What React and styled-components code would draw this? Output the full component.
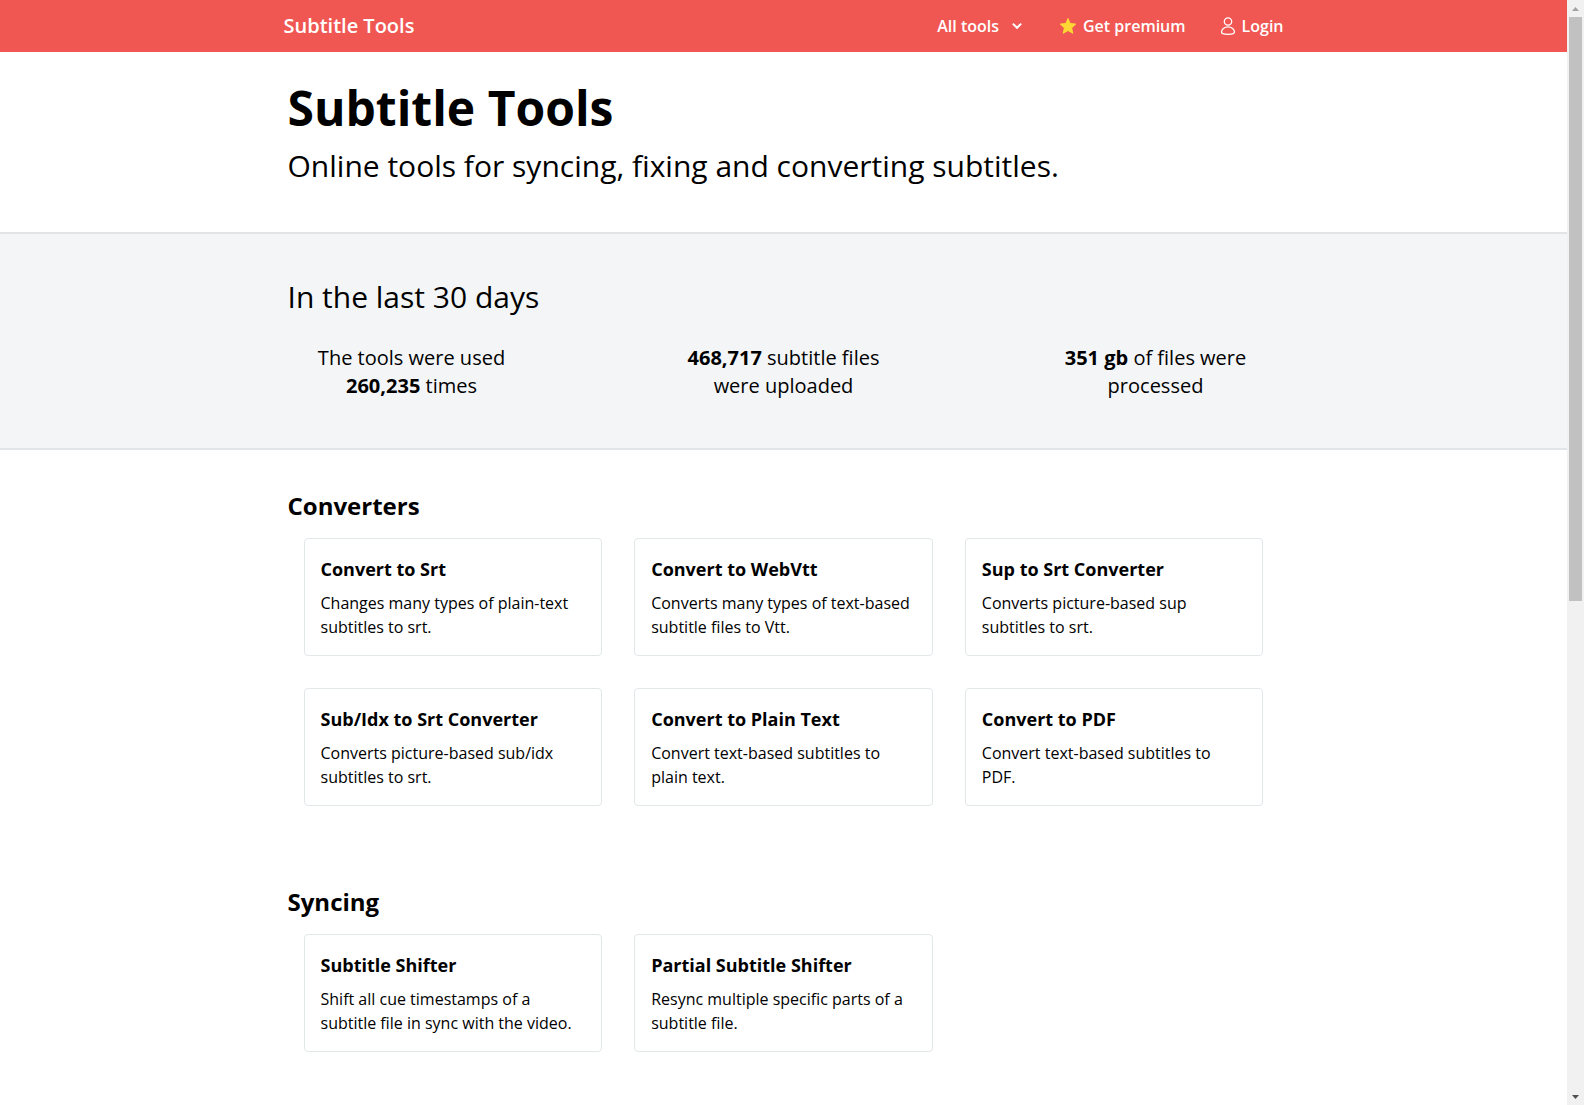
import React from "react";
import styled, { createGlobalStyle } from "styled-components";

const GlobalStyle = createGlobalStyle`
  * {
    box-sizing: border-box;
    margin: 0;
    padding: 0;
  }

  body {
    font-family: "Open Sans", sans-serif;
    font-size: 16px;
    font-weight: 400;
    line-height: 24px;
    color: #000000;
    background: #ffffff;
  }
`;

const Window = styled.div`
  display: grid;
  grid-template-columns: minmax(0, 1fr) 17px;
  height: 100vh;
`;

const Page = styled.div`
  overflow: hidden;
`;

const Header = styled.header`
  background: #f05752;
  color: #ffffff;
`;

const HeaderInner = styled.div`
  display: flex;
  align-items: center;
  justify-content: space-between;
  max-width: 1000px;
  height: 52px;
  margin: 0 auto;
`;

const Logo = styled.a`
  color: inherit;
  font-size: 20px;
  font-weight: 600;
  text-decoration: none;
`;

const Nav = styled.nav`
  display: flex;
  align-items: center;
  gap: 34px;
`;

const NavLink = styled.a`
  display: flex;
  align-items: center;
  gap: 6px;
  color: inherit;
  font-weight: 600;
  text-decoration: none;
`;

const NavButton = styled.button`
  display: flex;
  align-items: center;
  gap: 12px;
  border: none;
  background: none;
  color: inherit;
  font: inherit;
  font-weight: 600;
  cursor: pointer;
`;

const Container = styled.div`
  max-width: 1024px;
  margin: 0 auto;
  padding: ${(props) => props.$padding};
`;

const Title = styled.h1`
  font-size: 48px;
  font-weight: 700;
  line-height: 48px;
`;

const Lead = styled.p`
  margin-top: 16px;
  font-size: 30px;
  line-height: 36px;
`;

const Stats = styled.section`
  border-top: 2px solid #e2e5e7;
  border-bottom: 2px solid #e2e5e7;
  background: #f3f5f7;
`;

const StatsTitle = styled.h2`
  font-size: 30px;
  font-weight: 400;
  line-height: 30px;
`;

const StatsRow = styled.div`
  display: flex;
  justify-content: space-between;
  margin-top: 32px;
`;

const Stat = styled.p`
  width: 25%;
  padding: 0 24px;
  font-size: 20px;
  line-height: 28px;
  text-align: center;

  & b {
    font-weight: 700;
  }
`;

const Sections = styled.main`
  display: flex;
  flex-direction: column;
  gap: 80px;
`;

const SectionTitle = styled.h2`
  font-size: 24px;
  font-weight: 700;
  line-height: 32px;
`;

const CardGrid = styled.div`
  display: grid;
  grid-template-columns: repeat(3, minmax(0, 1fr));
  gap: 32px;
  margin-top: 16px;
  padding: 0 16px;
`;

const Card = styled.a`
  padding: 16px;
  border: 1px solid #e2e7ea;
  border-radius: 4px;
  color: inherit;
  text-decoration: none;
`;

const CardTitle = styled.h3`
  margin-bottom: 8px;
  font-size: 18px;
  font-weight: 700;
  line-height: 28px;
`;

const Scrollbar = styled.div`
  display: flex;
  flex-direction: column;
  background: #f1f1f1;
`;

const ScrollButton = styled.button`
  display: flex;
  align-items: center;
  justify-content: center;
  height: 17px;
  border: none;
  background: none;
  color: ${(props) => (props.$disabled ? "#a3a3a3" : "#505050")};
`;

const ScrollTrack = styled.div`
  flex: 1;
  padding: 0 2px;
`;

const ScrollThumb = styled.div`
  height: 54.5%;
  background: #c1c1c1;
`;

const sections = [
  {
    title: "Converters",
    tools: [
      {
        name: "Convert to Srt",
        text: "Changes many types of plain-text subtitles to srt.",
      },
      {
        name: "Convert to WebVtt",
        text: "Converts many types of text-based subtitle files to Vtt.",
      },
      {
        name: "Sup to Srt Converter",
        text: "Converts picture-based sup subtitles to srt.",
      },
      {
        name: "Sub/Idx to Srt Converter",
        text: "Converts picture-based sub/idx subtitles to srt.",
      },
      {
        name: "Convert to Plain Text",
        text: "Convert text-based subtitles to plain text.",
      },
      {
        name: "Convert to PDF",
        text: "Convert text-based subtitles to PDF.",
      },
    ],
  },
  {
    title: "Syncing",
    tools: [
      {
        name: "Subtitle Shifter",
        text: "Shift all cue timestamps of a subtitle file in sync with the video.",
      },
      {
        name: "Partial Subtitle Shifter",
        text: "Resync multiple specific parts of a subtitle file.",
      },
    ],
  },
];

function ChevronIcon() {
  return (
    <svg width="14" height="12" viewBox="0 0 14 12" fill="none">
      <path d="M1.800 3.600 6 7.800l4.200-4.200" stroke="currentColor" strokeWidth="2" />
    </svg>
  );
}

function StarIcon() {
  return (
    <svg width="18" height="18" viewBox="0 0 18 18">
      <path
        d="M9 1.500 11.200 6.500l5.500.6-4.100 3.800 1.200 5.400L9 13.500l-4.800 2.800 1.200-5.400-4.100-3.800 5.500-.6z"
        fill="#fdd835"
        stroke="#fdd835"
        strokeLinejoin="round"
      />
    </svg>
  );
}

function UserIcon() {
  return (
    <svg width="16" height="18" viewBox="0 0 16 18" fill="none">
      <g stroke="currentColor" strokeWidth="1.3">
        <circle cx="8" cy="4.500" r="3.700" />
        <path d="M8 9.800c3.800 0 6.500 2.600 6.500 5.200 0 1.500-1.200 2.300-6.500 2.300s-6.500-.8-6.500-2.300c0-2.600 2.700-5.200 6.500-5.200z" />
      </g>
    </svg>
  );
}

function ToolSection({ title, tools }) {
  return (
    <section>
      <SectionTitle>{title}</SectionTitle>
      <CardGrid>
        {tools.map((tool) => (
          <Card key={tool.name} href="#">
            <CardTitle>{tool.name}</CardTitle>
            <p>{tool.text}</p>
          </Card>
        ))}
      </CardGrid>
    </section>
  );
}

export default function App() {
  return (
    <Window>
      <GlobalStyle />
      <Page>
        <Header>
          <HeaderInner>
            <Logo href="#">Subtitle Tools</Logo>
            <Nav>
              <NavButton type="button">
                All tools
                <ChevronIcon />
              </NavButton>
              <NavLink href="#">
                <StarIcon />
                Get premium
              </NavLink>
              <NavLink href="#">
                <UserIcon />
                Login
              </NavLink>
            </Nav>
          </HeaderInner>
        </Header>
        <Container $padding="32px 16px 48px">
          <Title>Subtitle Tools</Title>
          <Lead>Online tools for syncing, fixing and converting subtitles.</Lead>
        </Container>
        <Stats>
          <Container $padding="48px 16px">
            <StatsTitle>In the last 30 days</StatsTitle>
            <StatsRow>
              <Stat>
                The tools were used <b>260,235</b> times
              </Stat>
              <Stat>
                <b>468,717</b> subtitle files were uploaded
              </Stat>
              <Stat>
                <b>351 gb</b> of files were processed
              </Stat>
            </StatsRow>
          </Container>
        </Stats>
        <Container $padding="40px 16px">
          <Sections>
            {sections.map((section) => (
              <ToolSection key={section.title} {...section} />
            ))}
          </Sections>
        </Container>
      </Page>
      <Scrollbar>
        <ScrollButton type="button" aria-label="Scroll up" $disabled>
          <svg width="7" height="4" viewBox="0 0 7 4" fill="currentColor">
            <path d="M0 4 3.500 0 7 4z" />
          </svg>
        </ScrollButton>
        <ScrollTrack>
          <ScrollThumb />
        </ScrollTrack>
        <ScrollButton type="button" aria-label="Scroll down">
          <svg width="7" height="4" viewBox="0 0 7 4" fill="currentColor">
            <path d="M0 0 3.500 4 7 0z" />
          </svg>
        </ScrollButton>
      </Scrollbar>
    </Window>
  );
}
